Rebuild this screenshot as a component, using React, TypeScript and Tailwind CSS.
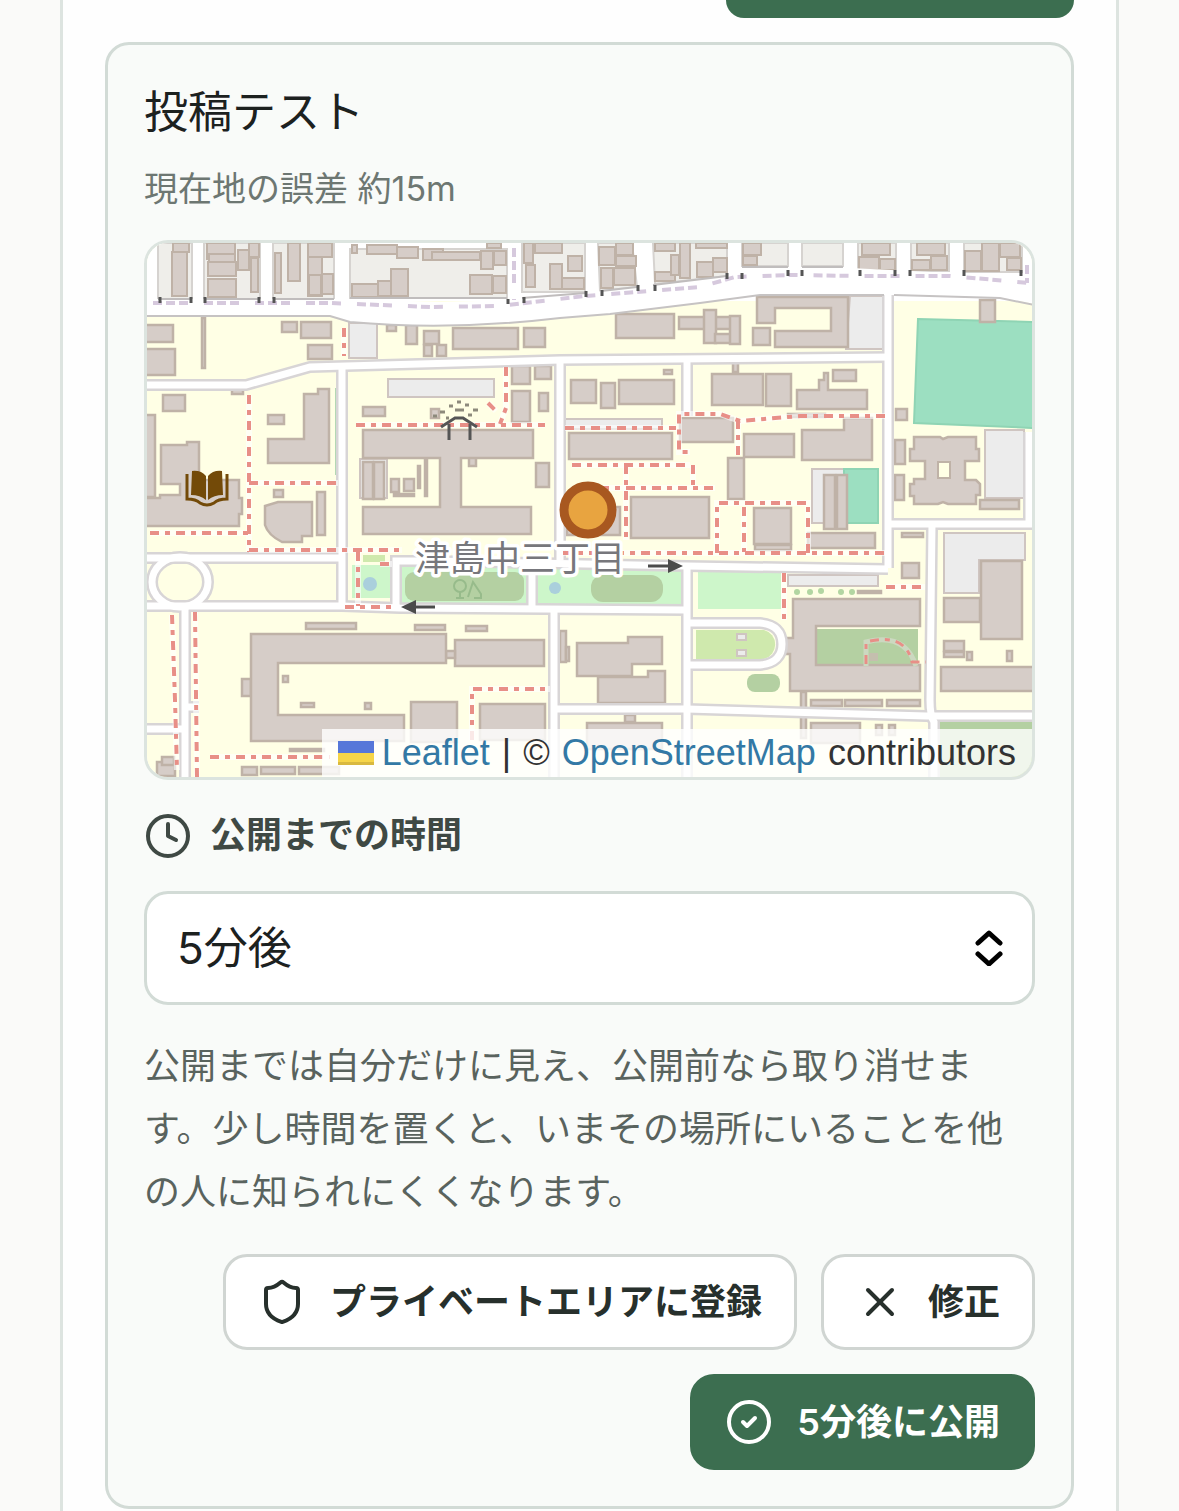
import { CircleCheck, Clock, Shield, X } from "lucide-react";

type Rect = [number, number, number, number];

const residential: Rect[] = [
  [158, 243, 34, 56], [204, 243, 56, 56], [273, 243, 61, 56], [350, 249, 157, 49], [522, 243, 63, 49],
  [742, 243, 46, 23], [802, 243, 41, 23], [858, 243, 38, 28], [911, 243, 38, 28], [964, 243, 58, 29],
];

const houses: Rect[] = [
  [173, 243, 16, 9], [172, 252, 15, 44], [207, 243, 28, 16], [209, 254, 26, 8], [208, 262, 28, 14],
  [208, 279, 28, 18], [238, 250, 11, 20], [249, 243, 10, 14], [251, 258, 7, 34], [275, 253, 6, 40],
  [288, 243, 12, 38], [308, 246, 14, 50], [308, 243, 24, 14], [322, 274, 11, 20], [309, 275, 12, 20],
  [352, 245, 5, 8], [367, 245, 30, 9], [397, 247, 21, 11], [423, 249, 20, 11], [352, 284, 26, 13],
  [378, 281, 13, 15], [391, 269, 17, 27], [432, 252, 48, 8], [481, 251, 12, 18], [494, 251, 12, 14],
  [487, 243, 14, 5], [470, 275, 22, 19], [493, 276, 13, 17], [524, 243, 9, 20], [526, 265, 9, 22],
  [535, 243, 27, 10], [550, 264, 12, 25], [562, 278, 22, 11], [568, 256, 14, 15], [599, 247, 16, 18],
  [616, 243, 17, 12], [601, 268, 12, 20], [614, 268, 21, 17], [616, 256, 20, 10], [655, 243, 20, 8],
  [655, 272, 20, 9], [671, 255, 8, 20], [680, 243, 10, 35], [697, 262, 16, 15], [713, 258, 14, 14],
  [696, 243, 31, 5], [743, 243, 18, 12], [743, 256, 14, 9], [859, 257, 20, 13], [880, 259, 15, 11],
  [862, 243, 28, 12], [912, 260, 18, 10], [931, 256, 16, 14], [917, 243, 28, 12], [965, 251, 16, 20],
  [982, 243, 17, 28], [1000, 243, 20, 14], [1007, 258, 14, 12],
];

const campus: Rect[] = [
  [145, 325, 28, 17], [145, 349, 30, 26], [202, 318, 3, 50], [282, 322, 15, 10], [301, 322, 30, 16],
  [308, 345, 24, 14], [387, 325, 9, 6], [406, 325, 11, 19], [424, 331, 15, 13], [424, 345, 8, 11], [437, 345, 9, 11],
  [453, 328, 65, 21], [524, 328, 21, 19], [616, 314, 58, 24], [679, 317, 60, 12], [704, 310, 12, 33],
  [715, 334, 24, 9], [730, 316, 10, 28], [753, 328, 17, 17], [980, 300, 15, 22], [163, 395, 22, 16],
  [232, 388, 11, 6], [268, 415, 16, 9], [363, 407, 22, 9], [431, 409, 8, 9], [512, 366, 18, 18],
  [535, 366, 16, 13], [512, 391, 18, 31], [539, 393, 9, 18], [571, 380, 25, 23], [601, 383, 14, 25],
  [619, 380, 55, 24], [664, 370, 8, 4], [712, 374, 51, 31], [766, 374, 25, 32], [733, 362, 5, 10],
  [833, 370, 23, 11], [788, 414, 37, 3], [896, 409, 11, 11], [274, 490, 9, 7], [317, 492, 8, 43],
  [363, 462, 10, 37], [374, 462, 10, 37], [391, 479, 8, 13], [404, 479, 10, 12], [394, 494, 20, 2],
  [418, 466, 2, 22], [425, 460, 2, 36], [536, 463, 13, 24], [469, 457, 7, 9], [569, 433, 103, 26],
  [680, 418, 53, 24], [744, 434, 50, 23], [728, 458, 16, 41], [824, 475, 11, 54], [837, 475, 10, 54],
  [631, 497, 78, 41], [567, 507, 53, 28], [754, 508, 37, 36], [755, 545, 36, 5], [808, 533, 67, 15],
  [895, 440, 10, 24], [895, 475, 9, 25], [980, 500, 39, 9], [902, 533, 21, 4], [902, 563, 17, 15],
  [981, 561, 41, 78], [944, 598, 36, 24], [858, 591, 23, 2], [306, 623, 50, 6], [415, 625, 30, 5],
  [466, 626, 21, 5], [455, 640, 89, 26], [446, 651, 9, 7], [242, 679, 9, 17], [283, 676, 5, 6],
  [301, 703, 13, 4], [365, 703, 6, 6], [411, 702, 46, 40], [290, 749, 34, 2], [242, 767, 15, 8],
  [261, 767, 34, 7], [299, 767, 40, 7], [480, 704, 65, 36], [560, 631, 6, 31], [566, 647, 3, 14],
  [587, 723, 75, 26], [625, 715, 10, 7], [157, 762, 18, 14], [162, 757, 12, 8], [801, 692, 5, 46],
  [811, 700, 31, 6], [845, 700, 37, 6], [887, 700, 33, 6], [811, 723, 49, 20], [876, 725, 6, 10],
  [889, 725, 6, 10], [944, 641, 20, 10], [944, 652, 20, 5], [967, 652, 5, 8], [1007, 651, 5, 10], [941, 667, 94, 24],
];

const buildingShapes = [
  "M757 297H848V347H775V331H831V308H775V323H757Z",
  "M797 390H819V380H824V373H828V390H867V409H797Z",
  "M304 394H318V389H329V463H268V439H304Z",
  "M145 415H155V497H145Z",
  "M161 445H187V442H199V480H239V498H242V514H239V526H145V498H160V495H180V484H161Z",
  "M265 506L278 502H312V536H302V542H282Q268 535 265 525Z",
  "M363 430H533V458H461V507H531V534H363V507H440V458H363Z",
  "M802 430H844V418H872V460H802Z",
  "M914 437H940L943 439L948 437H976V449H979V461H965V480H976L980 484V495H976V504H948L943 502L938 504H914V496H910V484H914V479H925V461H910V449H914Z",
  "M251 634H446V663H278V715H404V741H251Z",
  "M577 643H628V637H662V664H632V676H577Z",
  "M598 677H648V671H665V703H598Z",
  "M793 599H920V626H816V665H920V691H790V654H785V638H793Z",
];

const parking = [
  "M349 323H377V358H349Z",
  "M388 379H494V397H388Z",
  "M565 419H662V429H565Z",
  "M850 296H884V349H846Z",
  "M812 469H844V523H812Z",
  "M985 430H1024V498H985Z",
  "M944 533H1025V560H979V593H944Z",
  "M788 575H878V586H788Z",
  "M360 459H387V498H360Z",
];

const roads = [
  "M140 385H246L310 367L560 360L890 357",
  "M342 366V607",
  "M560 360V560",
  "M687 357V416",
  "M888 290V568",
  "M888 524H1040",
  "M1029 432V524",
  "M932 524L930 700Q930 716 934 722V780",
  "M140 558H342",
  "M396 607V561H430L687 566L888 569",
  "M140 606H342L400 608L687 610",
  "M532 568V608",
  "M687 566V780",
  "M185 607V780",
  "M140 729H185",
  "M185 707H199",
  "M554 610V780",
  "M554 709H687L926 716H1040",
  "M690 623H760Q782 625 782 644Q782 663 760 665H690",
  "M152 582A28 25 0 1 1 208 582A28 25 0 1 1 152 582Z",
];

const footpaths = [
  "M249 395V552", "M249 483H338", "M150 533H249", "M249 550H402", "M358 552V606", "M345 607H393",
  "M344 328V356", "M506 367V408L500 424", "M488 403L496 411", "M356 425H545", "M565 428H676",
  "M885 416H800L740 421L720 414H679V452H690",
  "M738 420V455", "M572 465H690", "M600 488H715", "M626 465V540", "M563 553H885", "M717 553V503H808V553",
  "M744 507V552", "M784 573V620", "M886 587H925", "M693 465V488", "M172 615L175 700L177 770", "M195 612L197 777",
  "M210 757H330", "M472 740V689H550", "M380 564H392",
];

function RectShapes({ items, className }: { items: Rect[]; className: string }) {
  return (
    <g className={className}>
      {items.map(([x, y, width, height]) => (
        <rect key={`${x}-${y}`} x={x} y={y} width={width} height={height} />
      ))}
    </g>
  );
}

function PathShapes({ items, className }: { items: string[]; className: string }) {
  return (
    <g className={className}>
      {items.map((d) => (
        <path key={d} d={d} />
      ))}
    </g>
  );
}

function CampusMap() {
  return (
    <svg
      viewBox="147 243 885 534"
      preserveAspectRatio="xMidYMid slice"
      className="block size-full"
      role="img"
      aria-label="津島中三丁目"
    >
      <rect x="147" y="243" width="885" height="534" className="fill-[#ffffe5]" />

      {/* northern blocks */}
      <rect x="147" y="243" width="885" height="58" className="fill-white" />
      <RectShapes items={residential} className="fill-[#efeeea] stroke-[#d6d3d0] stroke-2" />
      <path
        d="M598 243H632L637 287L600 291ZM653 243H727V276L655 284Z"
        className="fill-[#efeeea] stroke-[#d6d3d0] stroke-2"
      />
      <RectShapes items={houses} className="fill-[#d6cdc8] stroke-[#bfb2a7] stroke-2" />

      {/* greenery */}
      <g className="fill-[#cdf6ca]">
        <path d="M352 565H392V598H352ZM400 567H528V603H400ZM537 569H684V605H537ZM698 571H781V609H698Z" />
      </g>
      <path d="M696 630H764A15 15 0 0 1 764 659H696Z" className="fill-[#cfe9ad]" />
      <path d="M363 555H385V562H363Z" className="fill-[#cfe9ad]" />
      <g className="fill-[#b4d0a2]">
        <rect x="405" y="572" width="119" height="29" rx="9" />
        <rect x="591" y="575" width="72" height="27" rx="12" />
        <rect x="747" y="674" width="33" height="18" rx="8" />
        <rect x="816" y="629" width="102" height="38" />
        <rect x="940" y="722" width="95" height="60" />
      </g>
      <g className="fill-[#aacfdc]">
        <circle cx="370" cy="584" r="7" />
        <circle cx="555" cy="588" r="6" />
      </g>
      <g className="fill-none stroke-[#97bb8b] stroke-2">
        <circle cx="460" cy="586" r="6" />
        <path d="M456 598H464M460 598V592M468 597L473 582L481 594V598H474" />
      </g>
      <path d="M918 319L1034 322V428L914 423Z" className="fill-[#9cdfc1] stroke-[#8fd4b4] stroke-2" />
      <PathShapes items={parking} className="fill-[#ececec] stroke-[#cfc5c1] stroke-2" />
      <path d="M844 469H878V523H844Z" className="fill-[#9cdfc1] stroke-[#8fd4b4] stroke-2" />
      <path d="M336 388V475" className="fill-none stroke-[#b4d8b4] stroke-2" />

      <RectShapes items={campus} className="fill-[#d6cdc8] stroke-[#bfb2a7] stroke-[2.5]" />
      <PathShapes items={buildingShapes} className="fill-[#d6cdc8] stroke-[#bfb2a7] stroke-[2.5]" />
      <path d="M938 462H950V478H938Z" className="fill-[#ffffe5] stroke-[#bfb2a7] stroke-2" />
      <path d="M737 634H746V640H737ZM737 650H746V656H737Z" className="fill-[#ececec] stroke-[#cfc5c1] stroke-2" />
      <path d="M866 666V642Q905 632 916 666" className="fill-none stroke-[#ccd8c0] stroke-[5]" />
      <path d="M869 653H878V661H869Z" className="fill-[#c4bfae]" />
      <g className="fill-[#b2d6a2]">
        <circle cx="797" cy="592" r="3" />
        <circle cx="810" cy="592" r="3" />
        <circle cx="821" cy="591" r="3" />
        <circle cx="841" cy="592" r="3" />
        <circle cx="852" cy="592" r="3" />
      </g>

      {/* roads: casing first, then surface */}
      <PathShapes items={roads} className="fill-none stroke-[#d8d5d6] stroke-[12]" />
      <PathShapes items={roads} className="fill-none stroke-white stroke-[7]" />
      <path
        d="M140 299H350L440 302L520 300L640 287L727 276L745 268H850L1034 277V304L1000 297L890 295H760L700 303L610 314L560 318Q450 331 350 322L330 316L140 315Z"
        className="fill-white"
      />
      <path
        d="M140 316L330 316L350 322Q450 331 560 318L610 314L700 303L760 295H884M894 295L1000 298L1034 305"
        className="fill-none stroke-[#c6c3c3] stroke-2"
      />
      <path
        d="M158 299H192M204 299H260M273 299H334M350 298H507M522 298L586 293M601 291L637 287M653 285L727 276M742 267H788M802 267H843"
        className="fill-none stroke-[#c0bdbd] stroke-2"
      />
      <path
        d="M153 303H330L430 307L500 306L585 296L700 287L735 277L790 275L860 276L950 276L1030 283M514 248V300M1027 265V283"
        strokeDasharray="9 4 9 4 9 16"
        className="fill-none stroke-[#d6c9dd] stroke-[4]"
      />
      <path
        d="M160 297V303M191 297V303M205 297V303M259 297V303M274 297V303M508 299V304M524 297V303M586 291V297M602 290V296M638 285V291M655 285V291M727 273V279M742 273V279M788 270V276M802 270V276M860 270V276M895 270V276M910 270V276M964 270V276M1021 270V276"
        className="fill-none stroke-[#555] stroke-[3]"
      />

      <PathShapes items={footpaths} className="fill-none stroke-white/60 stroke-[6]" />
      <g strokeDasharray="9 6 5 6">
        <PathShapes items={footpaths} className="fill-none stroke-[#e88f87] stroke-[4]" />
        <path d="M866 664V642Q905 632 912 662H926" className="fill-none stroke-[#e88f87] stroke-[3]" />
      </g>

      {/* shelter */}
      <path
        d="M440 412H445M449 406H453M457 402H461M465 405H469M473 410H478M446 418H449M455 410H464M468 415H472M433 416H437"
        className="fill-none stroke-[#8d8a7c] stroke-[3]"
      />
      <path d="M441 427L455 418H463L477 427M449 424V440M470 424V440" className="fill-none stroke-[#555] stroke-[3]" />

      {/* library */}
      <g className="fill-[#734a08]">
        <path d="M192 471Q201 470 206 476V500Q200 495 191 495ZM222 471Q213 470 208 476V500Q214 495 223 495Z" />
        <path
          d="M187 474V499Q196 499 200 503Q207 507 214 503Q218 499 227 499V474"
          className="fill-none stroke-[#734a08] stroke-[3]"
        />
      </g>

      {/* one-way arrows */}
      <path d="M648 566H672M412 607H435" className="fill-none stroke-[#4b4b4b] stroke-[3]" />
      <path d="M668 559L683 566L668 573ZM416 600L401 607L416 614Z" className="fill-[#4b4b4b]" />

      <circle cx="588" cy="510" r="24" className="fill-[#e8a440] stroke-[#a85820] stroke-[9]" />
      <text
        x="415"
        y="571"
        fontSize="35"
        paintOrder="stroke"
        strokeLinejoin="round"
        className="fill-[#77777c] stroke-white stroke-[7] font-['Noto_Sans_CJK_JP',sans-serif]"
      >
        津島中三丁目
      </text>
    </svg>
  );
}

function MapPreview() {
  return (
    <div className="relative mt-6 h-[540px] overflow-hidden rounded-3xl border-3 border-[#dce4df]">
      <CampusMap />
      <div className="absolute right-0 bottom-0 flex h-12 items-center gap-3 bg-white/80 px-4 font-['Liberation_Sans',sans-serif] text-[36px] whitespace-nowrap text-[#333]">
        <a href="#leaflet" className="flex items-center gap-2 text-[#3379a5]">
          <svg viewBox="0 0 12 8" className="h-6 w-9">
            <path d="M0 0h12v4H0z" className="fill-[#5677d9]" />
            <path d="M0 4h12v3H0z" className="fill-[#f6d548]" />
            <path d="M0 7h12v1H0z" className="fill-[#d9b93f]" />
          </svg>
          Leaflet
        </a>
        <span>|</span>
        <span>©</span>
        <a href="#openstreetmap" className="text-[#3379a5]">
          OpenStreetMap
        </a>
        <span>contributors</span>
      </div>
    </div>
  );
}

const buttonBase =
  "flex h-24 items-center gap-6 rounded-3xl border-3 px-8 text-[36px] leading-[54px] font-semibold whitespace-nowrap";

export default function App() {
  return (
    <div className="min-h-screen bg-[#fafaf9] font-[Inter,'Noto_Sans_CJK_JP',sans-serif]">
      <main lang="ja" className="mx-[60px] min-h-screen border-x-3 border-[#dde4e0] bg-[#fefefe] px-[42px]">
        <div className="flex justify-end">
          <button type="button" aria-label="投稿" className="h-[18px] w-[348px] rounded-b-3xl bg-[#3c6e50]" />
        </div>

        <section className="mt-6 rounded-3xl border-3 border-[#d2dbd6] bg-[#f9fbf9] p-9">
          <h2 className="text-[44px] leading-[63px] text-[#1c211f]">投稿テスト</h2>
          <p className="mt-[18px] text-[34px] leading-[54px] text-[#6d7772]">現在地の誤差 約15m</p>

          <MapPreview />

          <label
            htmlFor="publish-delay"
            className="mt-[30px] flex items-center gap-[18px] text-[36px] leading-[51px] font-semibold text-[#3f4944]"
          >
            <Clock className="size-12" />
            公開までの時間
          </label>

          <div className="relative mt-[30px]">
            <select
              id="publish-delay"
              defaultValue="5"
              className="h-[114px] w-full appearance-none rounded-3xl border-3 border-[#d2dbd6] bg-white px-[30px] text-[44px] text-[#1c211f]"
            >
              <option value="5">5分後</option>
            </select>
            <svg
              viewBox="0 0 28 36"
              className="pointer-events-none absolute top-[39px] right-8 h-9 w-7 fill-none stroke-black stroke-[5]"
              strokeLinecap="round"
              strokeLinejoin="round"
            >
              <path d="M3 13L14 3L25 13M3 24L14 34L25 24" />
            </svg>
          </div>

          <p className="mt-[30px] text-[36px] leading-[63px] text-[#59635e]">
            公開までは自分だけに見え、公開前なら取り消せます。少し時間を置くと、いまその場所にいることを他の人に知られにくくなります。
          </p>

          <div className="mt-[30px] flex flex-wrap justify-end gap-6">
            <button type="button" className={`${buttonBase} border-[#d0d5d2] bg-white text-[#27302c]`}>
              <Shield className="size-12" />
              プライベートエリアに登録
            </button>
            <button type="button" className={`${buttonBase} border-[#d0d5d2] bg-white text-[#27302c]`}>
              <X className="size-12" />
              修正
            </button>
            <button type="button" className={`${buttonBase} border-[#3c6e50] bg-[#3c6e50] text-white`}>
              <CircleCheck className="size-12" />
              5分後に公開
            </button>
          </div>
        </section>
      </main>
    </div>
  );
}
